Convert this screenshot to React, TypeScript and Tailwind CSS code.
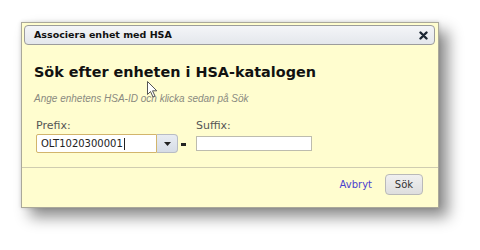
import React from "react";

export default function App() {
  return (
    <div className="relative w-[480px] h-[250px] bg-white overflow-hidden pl-[21px] pt-[22px]">
      <div className="w-[418px] h-[186px] flex flex-col border border-[#aaa89a] bg-[#fffdcf] shadow-[9px_9px_14px_rgba(0,0,0,0.45),0_0_4px_rgba(0,0,0,0.15)] font-['DejaVu_Sans',sans-serif]">
        <div className="px-[2px] pt-[2px] pr-[3px]">
          <div className="h-[20px] flex items-center justify-between rounded-[4px] border border-[#9c9c9c] bg-gradient-to-b from-[#f4f5f8] to-[#e4e7ec] pl-[9px] pr-[6px]">
            <span className="text-[9.5px] font-bold text-[#111]">Associera enhet med HSA</span>
            <svg width="9" height="9" viewBox="0 0 9 9" className="mt-[1px]">
              <path d="M1.5 1.5 L7.5 7.5 M7.5 1.5 L1.5 7.5" stroke="#1c2633" strokeWidth="2.4" strokeLinecap="round" />
            </svg>
          </div>
        </div>
        <div className="pl-[12px] pt-[17px]">
          <h1 className="text-[14.4px] leading-[20px] font-bold text-[#111]">Sök efter enheten i HSA-katalogen</h1>
          <p className="mt-[10px] text-[10px] leading-[14px] italic text-[#8a8a80] font-['Liberation_Sans',sans-serif]">
            Ange enhetens HSA-ID och klicka sedan på Sök
          </p>
          <div className="mt-[13px] pl-[2px] flex items-end">
            <div className="flex flex-col">
              <span className="text-[11px] leading-[14px] text-[#555]">Prefix:</span>
              <div className="mt-[1px] flex">
                <div className="w-[121px] h-[19px] border border-[#d2b56c] bg-white flex items-center pl-[4px] rounded-l-[2px]">
                  <span className="text-[10px] text-[#222]">OLT1020300001</span>
                  <span className="w-[1px] h-[12px] bg-[#222] ml-[1px]" />
                </div>
                <div className="w-[21px] h-[19px] border border-l-0 border-[#b8bcc4] bg-gradient-to-b from-[#e8ecf2] to-[#d6dce6] rounded-r-[4px] flex items-center justify-center">
                  <svg width="7" height="4" viewBox="0 0 7 4">
                    <path d="M0 0 L7 0 L3.5 4 Z" fill="#222" />
                  </svg>
                </div>
              </div>
            </div>
            <div className="w-[5px] h-[3px] bg-[#222] ml-[3px] mb-[7px]" />
            <div className="flex flex-col ml-[10px]">
              <span className="text-[11px] leading-[14px] text-[#555]">Suffix:</span>
              <div className="mt-[3px] mb-[2px] w-[116px] h-[15px] border border-[#bdbcae] bg-white" />
            </div>
          </div>
        </div>
        <div className="mt-[14px] border-t border-[#cfccb0]" />
        <div className="flex items-center justify-end pt-[6px] pr-[15px]">
          <span className="text-[10px] text-[#4b3fcf] mr-[13px]">Avbryt</span>
          <div className="w-[38px] h-[21px] rounded-[4px] border border-[#b9b9b9] bg-gradient-to-b from-[#f0f0f0] to-[#dedede] flex items-center justify-center">
            <span className="text-[10px] text-[#333]">Sök</span>
          </div>
        </div>
      </div>
      <svg className="absolute left-[147px] top-[81px]" width="11" height="17" viewBox="0 0 11 17">
        <path d="M0.5 0.5 L0.5 13.5 L3.5 10.5 L6 16 L8 15 L5.5 9.8 L9.8 9.8 Z" fill="#fff" stroke="#555" strokeWidth="1" strokeLinejoin="round" />
      </svg>
    </div>
  );
}
